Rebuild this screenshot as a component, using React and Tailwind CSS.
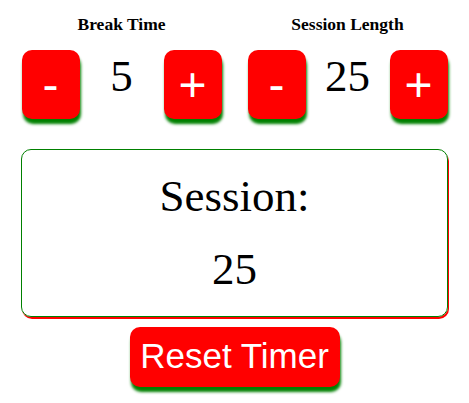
import React, { useState } from 'react';

const serif = { fontFamily: '"Liberation Serif", "Times New Roman", serif' };

function StepButton({ label, onClick }) {
    return (
        <button
            onClick={onClick}
            className="flex items-center justify-center w-[58px] h-[69px] pt-[1px] rounded-[10px] bg-[#ff0000] text-white text-[48px] leading-none font-['Liberation_Sans',Arial,sans-serif] shadow-[1px_5px_3px_#008000]"
        >
            {label}
        </button>
    );
}

function Control({ title, value, onDec, onInc }) {
    return (
        <div className="flex flex-col w-[200px]">
            <h4 className="pt-[16px] text-center text-[17.5px] leading-none font-bold text-black">{title}</h4>
            <div className="mt-[16px] flex items-start justify-between">
                <StepButton label="-" onClick={onDec} />
                <span className="mt-[4px] text-[45px] leading-none text-black">{value}</span>
                <StepButton label="+" onClick={onInc} />
            </div>
        </div>
    );
}

export default function App() {
    const [breakLen, setBreakLen] = useState(5);
    const [sessionLen, setSessionLen] = useState(25);

    const clamp = (n) => Math.min(60, Math.max(1, n));

    return (
        <div className="w-[469px] h-[403px] bg-white flex flex-col items-center" style={serif}>
            <div className="flex gap-[26px]">
                <Control
                    title="Break Time"
                    value={breakLen}
                    onDec={() => setBreakLen(clamp(breakLen - 1))}
                    onInc={() => setBreakLen(clamp(breakLen + 1))}
                />
                <Control
                    title="Session Length"
                    value={sessionLen}
                    onDec={() => setSessionLen(clamp(sessionLen - 1))}
                    onInc={() => setSessionLen(clamp(sessionLen + 1))}
                />
            </div>

            <div className="mt-[30px] w-[427px] h-[168px] border border-[#008000] rounded-[10px] shadow-[1px_2px_0_#ff0000] py-[10px] text-center text-black text-[45px]">
                <div className="leading-[73px]">Session:</div>
                <div className="leading-[73px]">{sessionLen}</div>
            </div>

            <button
                onClick={() => { setBreakLen(5); setSessionLen(25); }}
                className="mt-[10px] flex items-center justify-center w-[210px] h-[60px] rounded-[10px] bg-[#ff0000] text-white text-[35px] font-['Liberation_Sans',Arial,sans-serif] shadow-[1px_5px_3px_#008000]"
            >
                Reset Timer
            </button>
        </div>
    );
}
